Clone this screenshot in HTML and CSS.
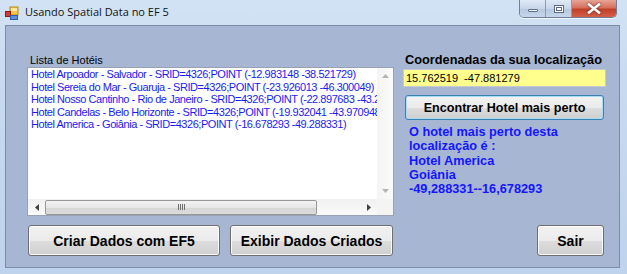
FILE: index.html
```html
<!DOCTYPE html>
<html lang="pt">
<head>
<meta charset="utf-8">
<title>Usando Spatial Data no EF 5</title>
<link rel="stylesheet" href="styles.css">
</head>
<body>
<div class="window">
  <div class="titlebar">
    <svg class="app-icon" width="14" height="14" viewBox="0 0 14 14">
      <rect x="5" y="1" width="8" height="8" fill="#f3c64a" stroke="#b88a1c" stroke-width="1"/>
      <rect x="6" y="2" width="6" height="3" fill="#fbe9a6"/>
      <rect x="0.5" y="5.5" width="5" height="5" fill="#d83b2b" stroke="#8e1d12" stroke-width="1"/>
      <rect x="5.5" y="9.5" width="7" height="4" fill="#5d8fd6" stroke="#2f5ea8" stroke-width="1"/>
    </svg>
    <span class="title">Usando Spatial Data no EF 5</span>
    <div class="caption-buttons">
      <div class="cap cap-min"><span class="min-bar"></span></div>
      <div class="cap cap-max"><span class="max-box"></span></div>
      <div class="cap cap-close">
        <svg width="14" height="11" viewBox="0 0 14 11"><path d="M2 1.5 L12 9.5 M12 1.5 L2 9.5" stroke="#fff" stroke-width="2.6" stroke-linecap="square"/></svg>
      </div>
    </div>
  </div>
  <div class="client">
    <div class="main">
      <div class="left-col">
        <div class="list-label">Lista de Hotéis</div>
        <div class="listbox">
          <div class="list-body">
            <div class="items">
              <div class="item">Hotel Arpoador - Salvador - SRID=4326;POINT (-12.983148 -38.521729)</div>
              <div class="item">Hotel Sereia do Mar - Guaruja - SRID=4326;POINT (-23.926013 -46.300049)</div>
              <div class="item">Hotel Nosso Cantinho - Rio de Janeiro - SRID=4326;POINT (-22.897683 -43.207163)</div>
              <div class="item">Hotel Candelas - Belo Horizonte - SRID=4326;POINT (-19.932041 -43.970948)</div>
              <div class="item">Hotel America - Goiânia - SRID=4326;POINT (-16.678293 -49.288331)</div>
            </div>
            <div class="vscroll">
              <div class="arrow-box"><svg width="7" height="4" viewBox="0 0 7 4"><path d="M0 4 L3.5 0 L7 4 Z" fill="#b4b4b4"/></svg></div>
              <div class="arrow-box"><svg width="7" height="4" viewBox="0 0 7 4"><path d="M0 0 L3.5 4 L7 0 Z" fill="#b4b4b4"/></svg></div>
            </div>
          </div>
          <div class="list-foot">
            <div class="hscroll">
              <div class="harrow"><svg width="4" height="7" viewBox="0 0 4 7"><path d="M4 0 L0 3.5 L4 7 Z" fill="#404040"/></svg></div>
              <div class="thumb"><span class="grip"></span></div>
              <div class="htrack"></div>
              <div class="harrow"><svg width="4" height="7" viewBox="0 0 4 7"><path d="M0 0 L4 3.5 L0 7 Z" fill="#404040"/></svg></div>
            </div>
            <div class="corner"></div>
          </div>
        </div>
      </div>
      <div class="right-col">
        <div class="coord-label">Coordenadas da sua localização</div>
        <div class="coord-input">15.762519&nbsp;&nbsp;-47.881279</div>
        <button class="btn btn-default btn-find">Encontrar Hotel mais perto</button>
        <div class="result">O hotel mais perto desta<br>localização é :<br>Hotel America<br>Goiânia<br>-49,288331--16,678293</div>
      </div>
    </div>
    <div class="actions">
      <button class="btn btn-create">Criar Dados com EF5</button>
      <button class="btn btn-show">Exibir Dados Criados</button>
      <button class="btn btn-exit">Sair</button>
    </div>
  </div>
</div>
</body>
</html>
```
FILE: styles.css
```css
* { box-sizing: border-box; }
html, body { margin: 0; padding: 0; }
body {
  width: 627px;
  height: 274px;
  overflow: hidden;
  font-family: "Liberation Sans", Arial, sans-serif;
  background: #c4d7ee;
}
.window {
  width: 627px;
  height: 274px;
  display: flex;
  flex-direction: column;
  background: linear-gradient(180deg, #d3e3f5 0%, #c7daf0 30%, #bfd3ec 100%);
}
.titlebar {
  height: 25px;
  display: flex;
  align-items: flex-start;
  flex: none;
}
.app-icon { margin: 6px 0 0 5px; flex: none; }
.title {
  margin: 4px 0 0 6px;
  font-family: "Open Sans", "Noto Sans", sans-serif;
  font-size: 11px;
  color: #111;
}
.caption-buttons {
  margin-left: auto;
  margin-right: 10px;
  display: flex;
  height: 18px;
  border: 1px solid #6f7f99;
  border-top: none;
  border-radius: 0 0 5px 5px;
  overflow: hidden;
  box-shadow: 0 1px 0 rgba(255,255,255,0.7);
}
.cap {
  height: 17px;
  display: flex;
  align-items: center;
  justify-content: center;
}
.cap-min, .cap-max {
  width: 26px;
  background: linear-gradient(180deg, #dfe9f6 0%, #c8d6ea 50%, #b6c8e0 51%, #c6d6ea 100%);
  border-right: 1px solid #8b9bb5;
}
.cap-min { align-items: flex-end; padding-bottom: 5px; }
.min-bar {
  width: 10px; height: 3px; background: #fff; border: 1px solid #5d6c85; border-radius: 1px;
}
.max-box {
  width: 10px; height: 8px; border: 1px solid #5d6c85; background: #fff; box-shadow: inset 0 0 0 1px #fff, inset 0 0 0 2px #5d6c85;
}
.cap-close {
  width: 44px;
  background: linear-gradient(180deg, #e8a597 0%, #d5705c 45%, #c0402a 55%, #d2614a 100%);
}
.cap-close svg { filter: drop-shadow(0 0 1px #6a1a10); }

.client {
  margin: 0 7px 6px 5px;
  height: 243px;
  border: 1px solid #7c8ba6;
  background-color: #a7b7d3;
  background-image: radial-gradient(rgba(255,255,255,0.12) 0.5px, transparent 0.6px);
  background-size: 2px 2px;
  padding: 27px 0 0 21px;
  display: flex;
  flex-direction: column;
}
.main { display: flex; gap: 9px; }
.left-col { width: 367px; display: flex; flex-direction: column; }
.list-label {
  font-size: 11px;
  line-height: 14px;
  height: 14px;
  margin-left: 3px;
  color: #000;
}
.listbox {
  height: 149px;
  border: 1px solid #98a2b3;
  background: #fff;
  display: flex;
  flex-direction: column;
}
.list-body { flex: 1; display: flex; min-height: 0; }
.items {
  flex: 1;
  overflow: hidden;
  padding: 0 0 0 3px;
  white-space: nowrap;
}
.item {
  font-size: 11px;
  letter-spacing: -0.45px;
  line-height: 12.5px;
  height: 12.5px;
  color: #1b1bf2;
}
.vscroll {
  width: 16px;
  background: linear-gradient(90deg, #f4f4f4, #fbfbfb);
  display: flex;
  flex-direction: column;
  justify-content: space-between;
}
.arrow-box { height: 16px; display: flex; align-items: center; justify-content: center; }
.list-foot { height: 16px; display: flex; flex: none; }
.hscroll {
  flex: 1;
  display: flex;
  align-items: center;
  background: linear-gradient(180deg, #f0f0f0, #fafafa);
}
.harrow { width: 17px; height: 16px; display: flex; align-items: center; justify-content: center; }
.thumb {
  width: 272px;
  height: 15px;
  border: 1px solid #979797;
  border-radius: 2px;
  background: linear-gradient(180deg, #f3f3f3 0%, #e6e6e6 50%, #d6d6d6 51%, #dcdcdc 100%);
  display: flex;
  align-items: center;
  justify-content: center;
}
.grip {
  width: 7px; height: 6px;
  background: repeating-linear-gradient(90deg, #6f6f6f 0 1px, transparent 1px 2px);
}
.htrack { flex: 1; }
.corner { width: 16px; background: #f4f4f4; }

.right-col { width: 203px; display: flex; flex-direction: column; }
.coord-label {
  font-size: 12.75px;
  font-weight: bold;
  line-height: 14px;
  margin-left: 2px;
  color: #000;
}
.coord-input {
  margin-top: 2px;
  height: 18px;
  border: 1px solid #c4c9d2;
  background: #ffff8e;
  font-size: 11px;
  line-height: 16px;
  padding-left: 2px;
  color: #000;
}
.btn {
  font-family: "Liberation Sans", Arial, sans-serif;
  font-weight: bold;
  color: #000;
  border: 1px solid #707070;
  border-radius: 3px;
  background: linear-gradient(180deg, #f2f2f2 0%, #ebebeb 50%, #dddddd 51%, #cfcfcf 100%);
  box-shadow: inset 0 0 0 1px rgba(255,255,255,0.8);
  padding: 0;
  cursor: default;
}
.btn-default { border-color: #3c7fb1; box-shadow: inset 0 0 0 1px #a6dcf5; }
.btn-find {
  margin-top: 8px;
  margin-left: 2px;
  width: 199px;
  height: 25px;
  font-size: 12.6px;
}
.result {
  margin: 5px 0 0 6px;
  font-size: 12.75px;
  font-weight: bold;
  line-height: 14.3px;
  color: #1515ff;
}
.actions {
  display: flex;
  margin-top: 9px;
  padding-left: 1px;
}
.actions .btn { height: 31px; font-size: 14px; }
.btn-create { width: 192px; }
.btn-show { width: 163px; margin-left: 10px; }
.btn-exit { width: 67px; margin-left: 144px; }
```
